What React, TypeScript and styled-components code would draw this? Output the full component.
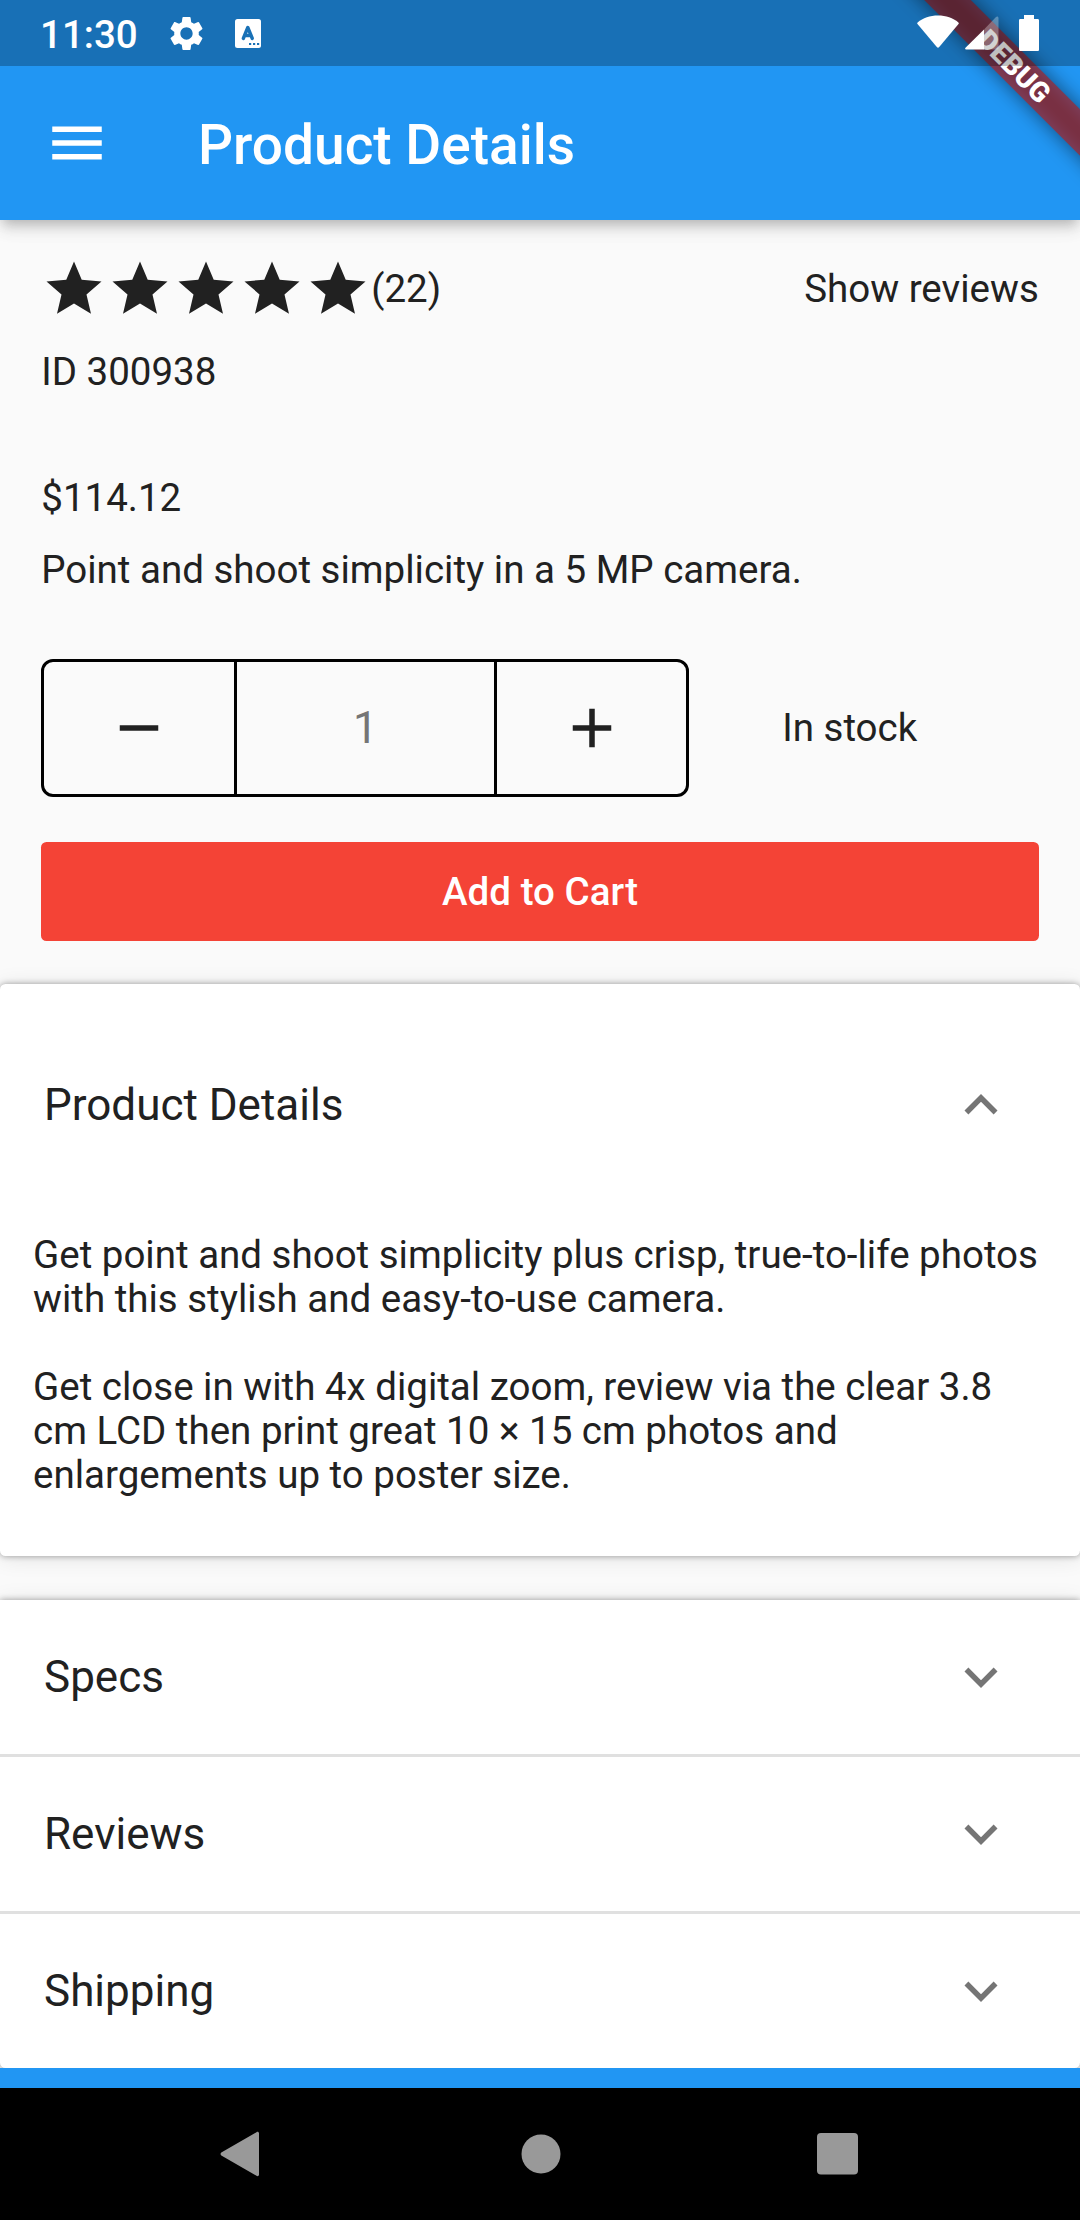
import React from 'react';
import styled, { createGlobalStyle } from 'styled-components';
import { MdAdd, MdExpandLess, MdExpandMore, MdMenu, MdRemove, MdSettings, MdStar } from 'react-icons/md';

const GlobalStyle = createGlobalStyle`
  body {
    margin: 0;
    background: #fafafa;
  }
`;

const Screen = styled.div`
  position: relative;
  display: flex;
  flex-direction: column;
  width: 1080px;
  height: 2220px;
  overflow: hidden;
  background: #fafafa;
  color: #212121;
  font-family: Roboto, sans-serif;
  font-size: 38.5px;
  line-height: 44px;
`;

const StatusBar = styled.div`
  position: absolute;
  z-index: 4;
  top: 0;
  left: 0;
  right: 0;
  box-sizing: border-box;
  height: 66px;
  padding: 0 41px 0 40px;
  display: flex;
  align-items: center;
  background: rgba(0, 0, 0, 0.25);
  color: #fff;
`;

const Clock = styled.span`
  font-weight: 500;
  font-size: 38.5px;
  line-height: 66px;
  padding-top: 3px;
  width: 126px;
`;

const StatusIcons = styled.div`
  display: flex;
  align-items: center;
  gap: 28px;
`;

const SignalIcons = styled.div`
  display: flex;
  align-items: center;
  margin-left: auto;
`;

const AppBar = styled.header`
  position: relative;
  z-index: 2;
  flex: none;
  box-sizing: border-box;
  height: 220px;
  padding: 66px 44px 0;
  display: flex;
  align-items: center;
  gap: 88px;
  background: #2196f3;
  color: #fff;
  box-shadow: 0 5.5px 11px -2.75px rgba(0, 0, 0, 0.2), 0 11px 13.75px rgba(0, 0, 0, 0.08),
    0 2.75px 27.5px rgba(0, 0, 0, 0.06);
`;

const AppTitle = styled.h1`
  margin: 0;
  padding-top: 3px;
  font-size: 55px;
  line-height: 66px;
  font-weight: 500;
`;

const DebugCorner = styled.div`
  position: absolute;
  z-index: 3;
  top: 0;
  right: 0;
  width: 300px;
  height: 300px;
  overflow: hidden;
`;

const DebugRibbon = styled.div`
  position: absolute;
  top: 49.5px;
  left: 34px;
  width: 400px;
  height: 33px;
  transform: rotate(45deg);
  background: rgba(183, 28, 28, 0.627);
  color: #fff;
  text-align: center;
  font-size: 28px;
  line-height: 33px;
  font-weight: 900;
`;

const DebugShadow = styled(DebugRibbon)`
  background: rgba(0, 0, 0, 0.5);
  filter: blur(10px);
`;

const Summary = styled.section`
  flex: none;
  box-sizing: border-box;
  height: 764px;
  padding: 35.5px 41.25px 43.5px;
  display: flex;
  flex-direction: column;
`;

const SpreadRow = styled.div`
  display: flex;
  align-items: center;
  height: 66px;
`;

const Stars = styled.div`
  display: flex;
`;

const ReviewsLink = styled.span`
  margin-left: auto;
`;

const TextLine = styled.p<{ $top: number }>`
  margin: ${(p) => p.$top}px 0 0;
`;

const BuyRow = styled.div`
  display: flex;
  align-items: center;
  margin-top: 67.5px;
  gap: 93px;
`;

const Stepper = styled.div`
  box-sizing: border-box;
  display: grid;
  grid-template-columns: 189.5px 1fr 189.5px;
  width: 648px;
  height: 138px;
  border: 3px solid #000;
  border-radius: 12px;
`;

const StepButton = styled.button`
  display: flex;
  align-items: center;
  justify-content: center;
  padding: 0;
  border: 0;
  background: none;
  color: #212121;
`;

const Quantity = styled.div`
  display: flex;
  align-items: center;
  justify-content: center;
  border: solid #000;
  border-width: 0 3px;
  color: #757575;
  font-size: 44px;
`;

const CartButton = styled.button`
  margin-top: auto;
  height: 99px;
  padding: 2px 0 0;
  border: 0;
  border-radius: 5.5px;
  background: #f44336;
  color: #fff;
  font: 500 38.5px/44px Roboto, sans-serif;
  letter-spacing: 0.05px;
`;

const Card = styled.section<{ $square?: boolean }>`
  flex: none;
  position: relative;
  background: #fff;
  border-radius: ${(p) => (p.$square ? '0 0 5.5px 5.5px' : '5.5px')};
  box-shadow: 0 0 6px rgba(0, 0, 0, 0.36), 0 2px 22px rgba(0, 0, 0, 0.1);
`;

const DetailsCard = styled(Card)`
  height: 572px;
  margin-bottom: 44px;
`;

const PanelHeader = styled.div<{ $height: number }>`
  box-sizing: border-box;
  height: ${(p) => p.$height}px;
  padding: 0 66px 0 44px;
  display: flex;
  align-items: center;
  justify-content: space-between;
  font-size: 44px;
  line-height: 52px;

  & + & {
    border-top: 3px solid #e0e0e0;
  }

  svg {
    color: #757575;
  }
`;

const Description = styled.div`
  padding: 7px 33px 0;
  white-space: pre-line;
`;

const BottomStrip = styled.div`
  flex: none;
  position: relative;
  height: 20px;
  background: #2196f3;
`;

const NavBar = styled.nav`
  flex: 1;
  position: relative;
  background: #000;
  display: flex;
  align-items: center;
  justify-content: space-between;
  padding: 0 222px 0 220px;
`;

const HomeIcon = styled.svg`
  margin-left: 4px;
`;

const DETAILS = `Get point and shoot simplicity plus crisp, true-to-life photos
with this stylish and easy-to-use camera.

Get close in with 4x digital zoom, review via the clear 3.8
cm LCD then print great 10 × 15 cm photos and
enlargements up to poster size.`;

const KeyboardBadge = () => (
  <svg width="26" height="29" viewBox="0 0 26 29">
    <rect width="26" height="29" rx="2.5" fill="#fff" />
    <path
      d="M8.300 19.500 12.800 8.500 17.300 19.500M10 16.500H15.600"
      fill="none"
      stroke="#1971b6"
      strokeWidth="3.400"
      strokeLinecap="round"
      strokeLinejoin="round"
    />
    <path d="M14 25h2.200M18 25h2.200M22 25h2.200" stroke="#1971b6" strokeWidth="2.200" />
  </svg>
);

const WifiSvg = styled.svg`
  margin: 0 6px 3px 0;
`;

const WifiIcon = () => (
  <WifiSvg width="42" height="34" viewBox="0 0 42 34">
    <path d="M0.6 7.4C6 3 13 .5 21 .5s15 2.5 20.4 6.900c.5.5.5 1.200.1 1.700L22 32.200c-.6.6-1.400.6-2 0L.5 9.100C.1 8.600.1 7.900.6 7.400z" fill="#fff" />
  </WifiSvg>
);

const CellIcon = () => (
  <svg width="34" height="34" viewBox="0 0 34 34">
    <path d="M19 13.500V33.500H1.200C0 33.500-.2 32.500.5 31.800z" fill="#fff" />
    <path d="M19 13.500 31 1c1-1 2.500-.6 2.500 1v30c0 1-.5 1.500-1.500 1.500H19z" fill="#fff" fillOpacity="0.3" />
  </svg>
);

const BatterySvg = styled.svg`
  margin-left: 20px;
`;

const BatteryIcon = () => (
  <BatterySvg width="20" height="36" viewBox="0 0 20 36">
    <path d="M5 0h10v4h3.500c1 0 1.500.5 1.500 1.500v29c0 1-.5 1.500-1.500 1.500h-17C.5 36 0 35.500 0 34.500v-29C0 4.500.5 4 1.500 4H5z" fill="#fff" />
  </BatterySvg>
);

export default function App() {
  return (
    <Screen>
      <GlobalStyle />
      <StatusBar>
        <Clock>11:30</Clock>
        <StatusIcons>
          <MdSettings size={41} />
          <KeyboardBadge />
        </StatusIcons>
        <SignalIcons>
          <WifiIcon />
          <CellIcon />
          <BatteryIcon />
        </SignalIcons>
      </StatusBar>
      <AppBar>
        <MdMenu size={66} />
        <AppTitle>Product Details</AppTitle>
      </AppBar>
      <DebugCorner>
        <DebugShadow aria-hidden="true" />
        <DebugRibbon>DEBUG</DebugRibbon>
      </DebugCorner>

      <Summary>
        <SpreadRow>
          <Stars>
            {[1, 2, 3, 4, 5].map((n) => (
              <MdStar key={n} size={66} />
            ))}
          </Stars>
          <span>(22)</span>
          <ReviewsLink>Show reviews</ReviewsLink>
        </SpreadRow>
        <TextLine $top={28}>ID 300938</TextLine>
        <TextLine $top={82}>$114.12</TextLine>
        <TextLine $top={28}>Point and shoot simplicity in a 5 MP camera.</TextLine>
        <BuyRow>
          <Stepper>
            <StepButton aria-label="Decrease">
              <MdRemove size={66} />
            </StepButton>
            <Quantity>1</Quantity>
            <StepButton aria-label="Increase">
              <MdAdd size={66} />
            </StepButton>
          </Stepper>
          <span>In stock</span>
        </BuyRow>
        <CartButton>Add to Cart</CartButton>
      </Summary>

      <DetailsCard>
        <PanelHeader $height={242}>
          Product Details
          <MdExpandLess size={66} />
        </PanelHeader>
        <Description>{DETAILS}</Description>
      </DetailsCard>

      <Card $square>
        <PanelHeader $height={154}>
          Specs
          <MdExpandMore size={66} />
        </PanelHeader>
        <PanelHeader $height={157}>
          Reviews
          <MdExpandMore size={66} />
        </PanelHeader>
        <PanelHeader $height={157}>
          Shipping
          <MdExpandMore size={66} />
        </PanelHeader>
      </Card>

      <BottomStrip />
      <NavBar>
        <svg width="40" height="46" viewBox="0 0 40 46">
          <path d="M36.500 1.200c1-.8 2.500-.2 2.500 1.300v41c0 1.500-1.500 2.100-2.500 1.300L1.300 24.600c-1-.8-1-2.400 0-3.200z" fill="#999" />
        </svg>
        <HomeIcon width="40" height="40" viewBox="0 0 40 40">
          <circle cx="20" cy="20" r="19.500" fill="#999" />
        </HomeIcon>
        <svg width="41" height="42" viewBox="0 0 41 42">
          <rect width="41" height="41.500" rx="4" fill="#999" />
        </svg>
      </NavBar>
    </Screen>
  );
}
